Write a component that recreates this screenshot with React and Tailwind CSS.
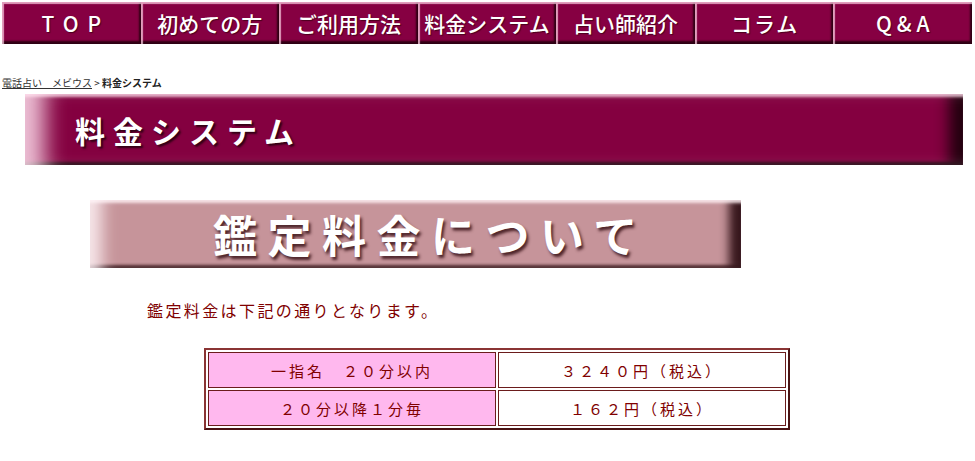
import React from "react";

const navItems = [
  { t: "TOP", c: "tracking-[9px] pl-[9px]" },
  { t: "初めての方", c: "" },
  { t: "ご利用方法", c: "" },
  { t: "料金システム", c: "" },
  { t: "占い師紹介", c: "" },
  { t: "コラム", c: "tracking-[2px] pl-[2px]" },
  { t: "Q&A", c: "tracking-[5px] pl-[5px]" },
];

const jp = { fontFamily: '"Noto Sans CJK JP", "Noto Sans", sans-serif' };

export default function App() {
  return (
    <div className="w-[975px] h-[461px] bg-white overflow-hidden" style={jp}>
      {/* nav */}
      <div className="flex ml-[2px] mt-[2px] w-[970px] h-[42px]">
        {navItems.map((n, i) => (
          <div
            key={i}
            className="flex-1 flex items-center justify-center bg-[#860042] text-white text-[21px] font-medium leading-none shadow-[inset_2px_2px_1px_rgba(255,210,230,0.75),inset_-2px_-3px_2px_rgba(30,0,10,0.85)] [text-shadow:1px_1px_1px_rgba(60,0,20,0.8)]"
          >
            <span className={n.c}>{n.t}</span>
          </div>
        ))}
      </div>

      {/* breadcrumb */}
      <div className="mt-[33px] ml-[2px] text-[10px] leading-[12px] text-[#222]">
        <span className="underline text-[#333]">電話占い　メビウス</span>
        <span>{"\u00a0>\u00a0"}</span>
        <span className="font-bold">料金システム</span>
      </div>

      {/* banner 1 */}
      <div className="mt-[5px] ml-[25px] w-[938px] h-[71px] bg-[#840040] flex items-center pl-[50px] shadow-[inset_32px_0_22px_-12px_rgba(255,225,238,0.85),inset_0_5px_3px_-2px_rgba(255,220,235,0.8),inset_-22px_0_14px_-8px_rgba(25,0,10,0.9),inset_0_-5px_3px_-2px_rgba(25,0,10,0.9)]">
        <span className="text-white text-[30px] font-bold tracking-[8px] leading-none [text-shadow:2px_2px_2px_rgba(40,0,15,0.9)]">
          料金システム
        </span>
      </div>

      {/* banner 2 */}
      <div className="mt-[35px] ml-[90px] w-[651px] h-[68px] bg-[#c6949a] flex items-center justify-start pl-[123px] shadow-[inset_22px_0_16px_-10px_rgba(255,245,248,0.85),inset_0_5px_3px_-2px_rgba(255,240,244,0.85),inset_-18px_0_10px_-6px_rgba(40,10,15,0.9),inset_0_-5px_3px_-2px_rgba(60,25,30,0.9)]">
        <span className="text-white text-[44px] font-bold tracking-[10.5px] leading-none [text-shadow:2px_3px_3px_rgba(70,30,35,0.95)]">
          鑑定料金について
        </span>
      </div>

      {/* paragraph */}
      <p className="mt-[32px] ml-[147px] text-[16px] leading-[20px] tracking-[2.4px] text-[#800000]">
        鑑定料金は下記の通りとなります。
      </p>

      {/* table */}
      <div className="mt-[28px] ml-[204px]">
        <table className="border-separate border-spacing-[2px] border-2 border-t-[#8a3434] border-l-[#8a3434] border-r-[#4a1414] border-b-[#4a1414] w-[586px] text-[15px] text-[#800000] tracking-[3px]">
          <tbody>
            <tr>
              <td className="w-[288px] h-[36px] bg-[#ffb8ee] border border-[#6b1c1c] text-center align-middle leading-none">
                一指名　２０分以内
              </td>
              <td className="h-[36px] bg-white border border-[#6b1c1c] text-center align-middle leading-none">
                ３２４０円（税込）
              </td>
            </tr>
            <tr>
              <td className="w-[288px] h-[36px] bg-[#ffb8ee] border border-[#6b1c1c] text-center align-middle leading-none">
                ２０分以降１分毎
              </td>
              <td className="h-[36px] bg-white border border-[#6b1c1c] text-center align-middle leading-none">
                １６２円（税込）
              </td>
            </tr>
          </tbody>
        </table>
      </div>
    </div>
  );
}
